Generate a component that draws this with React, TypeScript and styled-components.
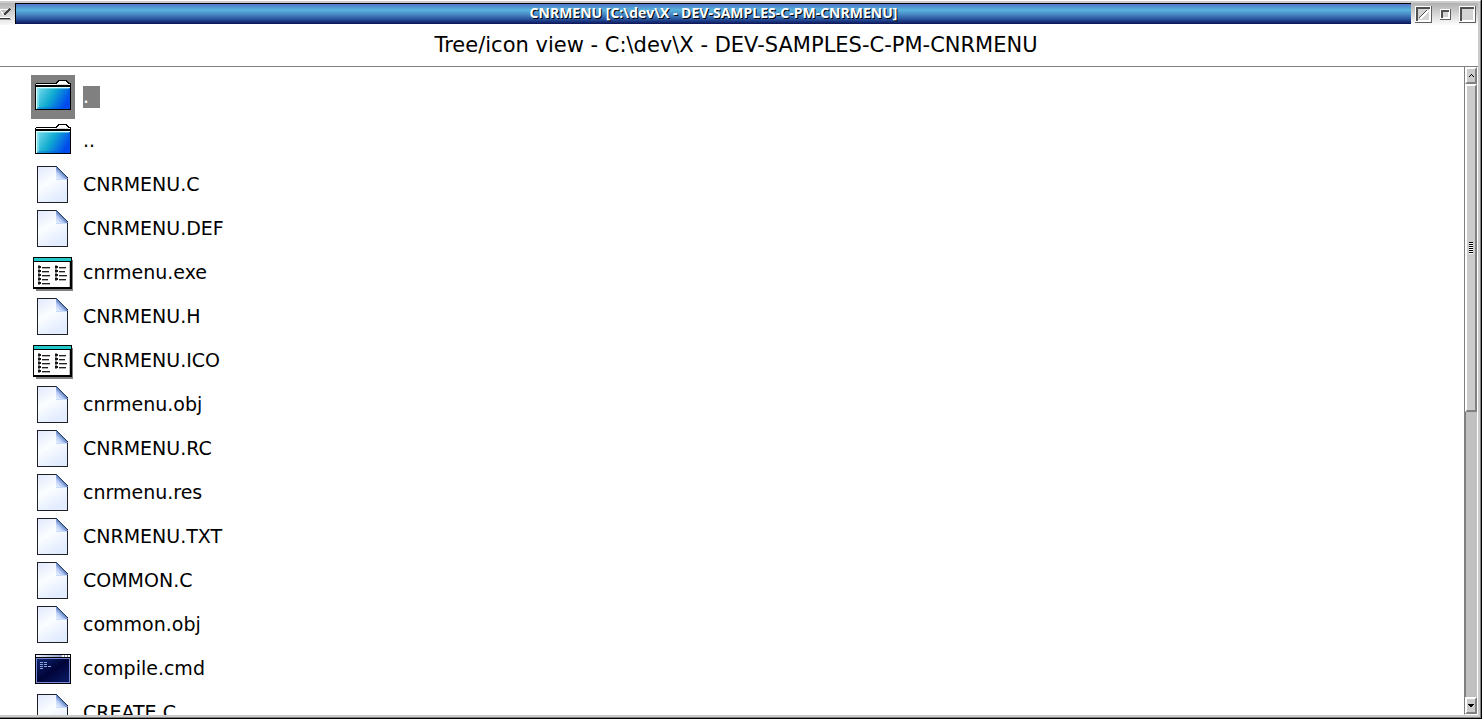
import React from "react";
import styled, { createGlobalStyle } from "styled-components";

const GlobalStyle = createGlobalStyle`
  * { box-sizing: border-box; }
  body { margin: 0; background: #fff; color: #000; font-family: "DejaVu Sans", sans-serif; }
  button { font: inherit; color: inherit; padding: 0; border: 0; background: none; border-radius: 0; }
  svg { display: block; shape-rendering: crispEdges; }
`;

const Frame = styled.div`
  height: 100vh;
  display: flex;
  flex-direction: column;
  overflow: hidden;
  background: #fff;
  border-right: 1px solid #000;
  border-bottom: 1px solid #000;
`;

const Bevel = styled.div`
  flex: 1;
  min-height: 0;
  display: flex;
  flex-direction: column;
  border-top: 1px solid #fff;
  border-right: 1px solid #808080;
  border-bottom: 1px solid #808080;
`;

const Inner = styled.div`
  flex: 1;
  min-height: 0;
  display: flex;
  flex-direction: column;
  border: 2px solid #ccc;
  border-left: 0;
`;

const TitleBar = styled.header`
  flex: none;
  height: 22px;
  display: flex;
`;

const SystemButton = styled.button`
  width: 15px;
  height: 22px;
  background: linear-gradient(#b4b4b4, #f8f8f8);
`;

const Caption = styled.h1`
  flex: 1;
  margin: 0;
  height: 21px;
  border-top: 1px solid #000;
  border-left: 1px solid #000;
  background: linear-gradient(#5078c8, #58b4dc 30%, #4888c4 52%, #2c58a0 74%, #102068 95%, #0c1450);
  color: #fff;
  font: 700 14px/18px "Open Sans", sans-serif;
  text-align: center;
  text-shadow: 1px 1px 0 #000;
  white-space: nowrap;
  overflow: hidden;
`;

const WindowControls = styled.div`
  display: flex;
  align-items: center;
  gap: 6px;
  padding: 0 2px 0 4px;
  background: linear-gradient(#b0b0b0, #fcfcfc);
`;

const ViewTitle = styled.h2`
  flex: none;
  margin: 0;
  height: 42px;
  padding-right: 6px;
  border-bottom: 1px solid #808080;
  font-size: 21px;
  font-weight: 400;
  line-height: 41px;
  text-align: center;
  white-space: nowrap;
`;

const Body = styled.main`
  flex: 1;
  min-height: 0;
  display: flex;
`;

const FileList = styled.ul`
  flex: 1;
  margin: 0;
  padding: 8px 0 0 31px;
  list-style: none;
  overflow: hidden;
`;

const FileButton = styled.button`
  display: flex;
  align-items: center;
  gap: 8px;
  height: 44px;
  text-align: left;
`;

const IconBox = styled.span<{ $selected: boolean }>`
  width: 44px;
  height: 44px;
  background: ${(p) => (p.$selected ? "#808080" : "transparent")};
`;

const FileName = styled.span<{ $selected: boolean }>`
  min-width: 17px;
  padding-bottom: 2px;
  font-size: 19px;
  line-height: 20px;
  white-space: nowrap;
  color: ${(p) => (p.$selected ? "#fff" : "#000")};
  background: ${(p) => (p.$selected ? "#808080" : "transparent")};
`;

const ScrollBar = styled.div`
  width: 14px;
  display: flex;
  flex-direction: column;
  border-left: 1px solid #808080;
  border-right: 1px solid #fff;
  border-bottom: 1px solid #fff;
`;

const ScrollButton = styled.button`
  flex: none;
  height: 17px;
  display: grid;
  place-items: center;
  background: #ccc;
  border: 2px solid;
  border-color: #fff #808080 #808080 #fff;
`;

const Track = styled.div`
  flex: 1;
  display: grid;
  grid-template-rows: 15fr 13fr;
  background: #c0c0c0;
  border-left: 1px solid #808080;
`;

const Thumb = styled.div`
  margin-left: -1px;
  display: grid;
  place-items: center;
  background: #ccc;
  border: 2px solid;
  border-color: #fff #808080 #808080 #fff;
`;

const Grip = styled.span`
  width: 4px;
  height: 12px;
  background: repeating-linear-gradient(#000 0 1px, #fff 1px 2px);
`;

const FolderIcon = () => (
  <svg width="44" height="44" viewBox="0 0 44 44" aria-hidden="true">
    <defs>
      <linearGradient id="folder" x1="0" y1="0.1" x2="1" y2="0.5">
        <stop offset="0" stopColor="#80dcec" />
        <stop offset="0.5" stopColor="#10acd0" />
        <stop offset="1" stopColor="#0048f0" />
      </linearGradient>
    </defs>
    <path d="M4 14V9l1-1h19l3-3h8l3 3h1l1 1v5z" fill="#000" />
    <path d="M5 9h20l3-3h6l3 3h2v1H5z" fill="#fff" />
    <path d="M25 9h12v1H25z" fill="#d8d8d8" />
    <path d="M4 11h36v24H4z" fill="#000" />
    <path d="M5 12h34v22H5z" fill="url(#folder)" />
    <path d="M5 34V12h34v1H6v21z" fill="#d8ffff" />
    <path d="M6 33V13h32v1H8v19z" fill="#a0f0f4" opacity=".5" />
    <path d="M7 32h30V14h2v20H6z" fill="#0058dc" opacity=".3" />
  </svg>
);

const DocumentIcon = () => (
  <svg width="44" height="44" viewBox="0 0 44 44" aria-hidden="true">
    <defs>
      <linearGradient id="paper" x1="0" y1="0" x2="0.5" y2="1">
        <stop offset="0" stopColor="#e0e8fc" />
        <stop offset="0.5" stopColor="#fbfdff" />
        <stop offset="1" stopColor="#e2ecff" />
      </linearGradient>
      <linearGradient id="fold" x1="0" y1="1" x2="0.5" y2="0.5">
        <stop offset="0" stopColor="#ecf4ff" />
        <stop offset="0.6" stopColor="#bcd0f8" />
        <stop offset="1" stopColor="#6888c4" />
      </linearGradient>
    </defs>
    <path d="M6.500 3.500h19l11 11v25h-30z" fill="url(#paper)" stroke="#202028" />
    <path d="M25 4v12h12z" fill="url(#fold)" />
    <path d="M25 16h11v1H25z" fill="#c8dcfc" />
    <path d="M25.500 3.500l11 11" stroke="#283c68" fill="none" />
  </svg>
);

const ProgramIcon = () => (
  <svg width="44" height="44" viewBox="0 0 44 44" aria-hidden="true">
    <path d="M5 9h37v31H5z" fill="#808080" />
    <path d="M2 6h39v32H2z" fill="#000" />
    <path d="M3 7h37v3H3z" fill="#20c8c8" />
    <path d="M3 11h35v25H3z" fill="#fff" />
    <path d="M38 11h1v25h-1z" fill="#c0c0c0" />
    <path d="M11 16h8v2h-8zM11 20h7v2h-7zM11 24h8v2h-8zM11 28h6v2h-6zM11 32h8v2h-8zM28 16h7v2h-7zM28 20h6v2h-6zM28 24h8v2h-8zM28 28h7v2h-7z" fill="#b0b0b0" />
    <path d="M7 14h2v20H7zM24 14h2v16h-2z" fill="#888" />
    <path d="M7 15h3v2H7zM7 19h3v2H7zM7 23h3v2H7zM7 27h3v2H7zM7 31h3v2H7zM24 15h3v2h-3zM24 19h3v2h-3zM24 23h3v2h-3zM24 27h3v2h-3z" fill="#181818" />
    <path d="M11 16h8v1h-8zM11 20h7v1h-7zM11 24h8v1h-8zM11 28h6v1h-6zM11 32h8v1h-8zM28 16h7v1h-7zM28 20h6v1h-6zM28 24h8v1h-8zM28 28h7v1h-7z" fill="#202020" />
  </svg>
);

const ConsoleIcon = () => (
  <svg width="44" height="44" viewBox="0 0 44 44" aria-hidden="true">
    <defs>
      <linearGradient id="screen" x1="0" y1="0" x2="1" y2="1">
        <stop offset="0" stopColor="#102470" />
        <stop offset="0.5" stopColor="#000438" />
        <stop offset="1" stopColor="#0c1c68" />
      </linearGradient>
      <linearGradient id="consoleBar">
        <stop offset="0" stopColor="#e8f0ff" />
        <stop offset="1" stopColor="#7088c0" />
      </linearGradient>
    </defs>
    <path d="M4 7h36v30H4z" fill="#000" />
    <path d="M5 8h34v2H5z" fill="url(#consoleBar)" />
    <path d="M31 8h2v2h-2zM34 8h2v2h-2zM37 8h2v2h-2z" fill="#fff" />
    <path d="M5 11h34v25H5z" fill="#7888d0" />
    <path d="M6 12h32v23H6z" fill="url(#screen)" />
    <path d="M9 15h3v1H9zM13 15h3v1h-3zM9 17h3v1H9zM13 17h3v1h-3zM9 19h3v1H9zM13 19h3v1h-3zM17 19h3v1h-3zM9 21h3v1H9z" fill="#8ca4dc" />
  </svg>
);

const icons = {
  folder: FolderIcon,
  document: DocumentIcon,
  program: ProgramIcon,
  console: ConsoleIcon,
};

const files: { name: string; kind: keyof typeof icons }[] = [
  { name: ".", kind: "folder" },
  { name: "..", kind: "folder" },
  { name: "CNRMENU.C", kind: "document" },
  { name: "CNRMENU.DEF", kind: "document" },
  { name: "cnrmenu.exe", kind: "program" },
  { name: "CNRMENU.H", kind: "document" },
  { name: "CNRMENU.ICO", kind: "program" },
  { name: "cnrmenu.obj", kind: "document" },
  { name: "CNRMENU.RC", kind: "document" },
  { name: "cnrmenu.res", kind: "document" },
  { name: "CNRMENU.TXT", kind: "document" },
  { name: "COMMON.C", kind: "document" },
  { name: "common.obj", kind: "document" },
  { name: "compile.cmd", kind: "console" },
  { name: "CREATE.C", kind: "document" },
];

const ControlBox = ({ size }: { size: number }) => (
  <>
    <path d={`M0 0h${size}v${size}H0z`} fill="#606060" />
    <path d={`M0 0h${size - 1}v${size - 1}H0z`} fill="#fff" />
    <path d={`M1 1h${size - 3}v${size - 3}H1z`} fill="#505050" />
    <path d={`M3 3h${size - 5}v${size - 5}H3z`} fill="#fff" />
    <path d={`M3 3h${size - 6}v${size - 6}H3z`} fill="#d4d4d4" />
  </>
);

export default function App() {
  const [selected, setSelected] = React.useState(".");
  return (
    <Frame>
      <GlobalStyle />
      <Bevel>
        <Inner>
          <TitleBar>
            <SystemButton aria-label="System menu">
              <svg width="15" height="22" viewBox="0 0 15 22">
                <path d="M0 6h10v1H0z" fill="#fff" />
                <path d="M0 7l4 5 5-5" fill="#c0c0c0" stroke="#fff" />
                <path d="M4 12l6-6" stroke="#404040" strokeWidth="2" />
                <path d="M0 14h10v1H0z" fill="#fff" />
                <path d="M0 15h10v1H0z" fill="#303030" />
                <path d="M0 16h11v1H0z" fill="#a0a0a0" />
              </svg>
            </SystemButton>
            <Caption>CNRMENU [C:\dev\X - DEV-SAMPLES-C-PM-CNRMENU]</Caption>
            <WindowControls>
              <button aria-label="Hide">
                <svg width="17" height="17" viewBox="0 0 17 17">
                  <ControlBox size={17} />
                  <path d="M5 13l8-8" stroke="#fff" strokeWidth="2" />
                  <path d="M4 12l8-8" stroke="#505050" strokeWidth="1" />
                </svg>
              </button>
              <button aria-label="Minimize">
                <svg width="15" height="11" viewBox="-2 0 15 11">
                  <ControlBox size={11} />
                </svg>
              </button>
              <button aria-label="Maximize">
                <svg width="17" height="17" viewBox="0 0 17 17">
                  <ControlBox size={17} />
                </svg>
              </button>
            </WindowControls>
          </TitleBar>
          <ViewTitle>Tree/icon view - C:\dev\X - DEV-SAMPLES-C-PM-CNRMENU</ViewTitle>
          <Body>
            <FileList>
              {files.map(({ name, kind }) => {
                const Icon = icons[kind];
                return (
                  <li key={name}>
                    <FileButton onClick={() => setSelected(name)}>
                      <IconBox $selected={name === selected}>
                        <Icon />
                      </IconBox>
                      <FileName $selected={name === selected}>{name}</FileName>
                    </FileButton>
                  </li>
                );
              })}
            </FileList>
            <ScrollBar>
              <ScrollButton aria-label="Scroll up">
                <svg width="5" height="3" viewBox="0 0 5 3">
                  <path d="M2 0h1v1h1v1h1v1H4V2H3V1H2v1H1v1H0V2h1V1h1z" />
                </svg>
              </ScrollButton>
              <Track>
                <Thumb>
                  <Grip />
                </Thumb>
              </Track>
              <ScrollButton aria-label="Scroll down">
                <svg width="6" height="3" viewBox="0 0 6 3">
                  <path d="M0 0h6v1H5v1H4v1H2V2H1V1H0z" />
                </svg>
              </ScrollButton>
            </ScrollBar>
          </Body>
        </Inner>
      </Bevel>
    </Frame>
  );
}
